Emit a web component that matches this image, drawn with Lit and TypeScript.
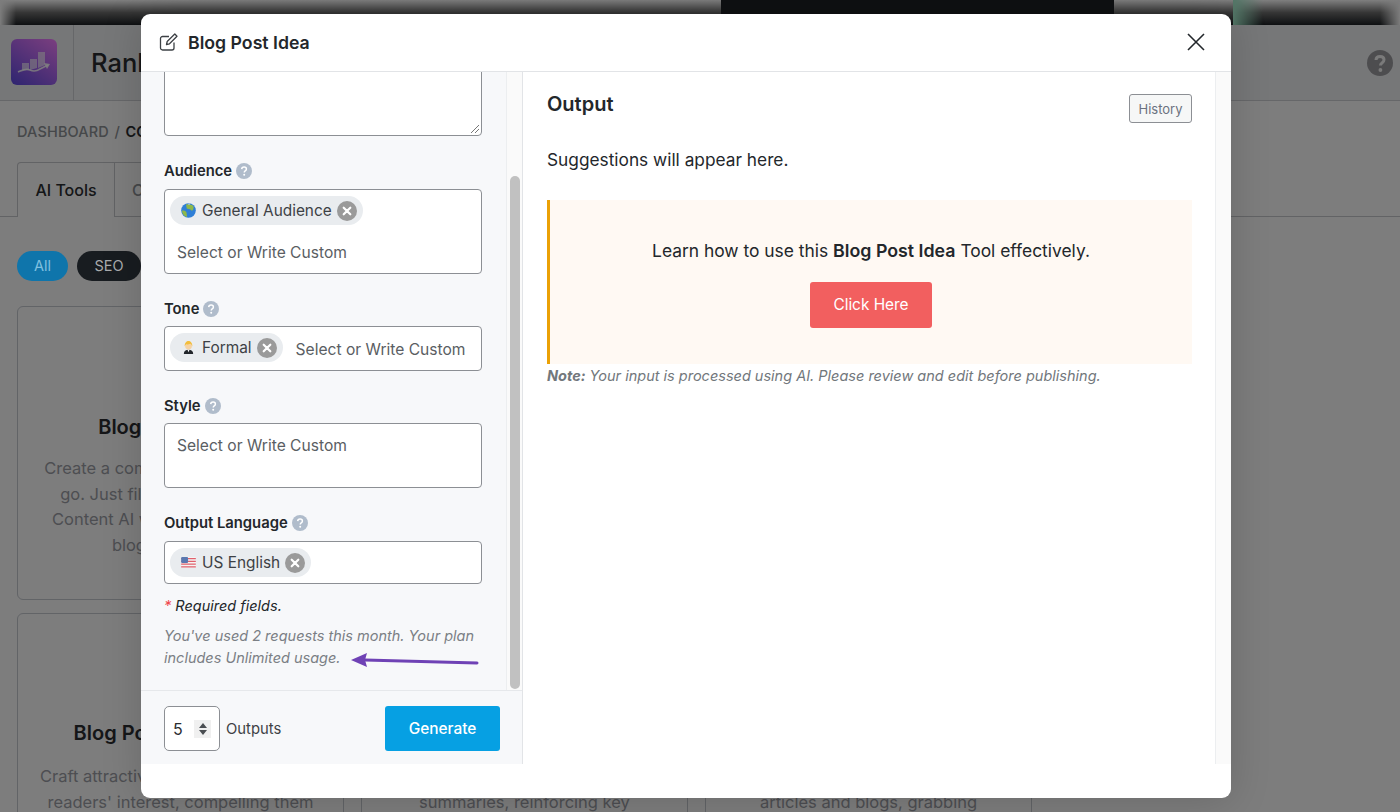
import { LitElement, html, css, svg } from "lit";
import { customElement } from "lit/decorators.js";

const globe = svg`<svg class="emo" viewBox="0 0 16 16" width="15" height="15"><circle cx="8" cy="8" r="7.800" fill="#2f7fd6"/><path d="M6 1c2 1 5 0 7 2 1 2 0 3 0 4-1 2-2 1-3 0-2-1-4 0-4-2 0-1-1-2 0-4zM3 8c1 0 3 1 3 3s1 3 0 4C3 14 1 11 1 8z" fill="#8fb84a"/><path d="M8 .6a7.4 7.4 0 0 1 2 .4L8 2z" fill="#fff" opacity=".8"/></svg>`;
const person = svg`<svg class="emo" viewBox="0 0 16 16" width="15" height="15"><path d="M3 15c0-3 2-4.500 5-4.500s5 1.500 5 4.500z" fill="#22262b"/><path d="M7 10.500h2l-1 2.500z" fill="#fff"/><circle cx="8" cy="6.500" r="3.600" fill="#f6d2a2"/><path d="M4 7c-.5-4 2-6 4-6s4.500 2 4 6c-.5-1.500-1-2.500-2-3-1.500.8-3.500.8-4.500.6C4.800 5 4.300 6 4 7z" fill="#f2bd3c"/></svg>`;
const flag = svg`<svg class="emo" viewBox="0 0 16 12" width="15" height="11"><rect width="16" height="12" rx="1.500" fill="#f4f4f4"/><path d="M0 1h16v1.500H0zM0 4h16v1.500H0zM0 7h16v1.500H0zM0 10h16v1.500H0z" fill="#e0606c"/><rect width="7.500" height="6.500" rx="1" fill="#5a78b0"/></svg>`;

const helpIcon = html`<svg class="help" viewBox="0 0 16 16" width="16" height="16"><circle cx="8" cy="8" r="8" fill="#b0bccb"/><path d="M5.700 6.100C5.800 4.800 6.800 4 8.100 4c1.400 0 2.300.8 2.300 2 0 1-.6 1.500-1.200 1.900-.6.400-.9.700-.9 1.400v.2" fill="none" stroke="#fff" stroke-width="1.500"/><circle cx="8.200" cy="11.800" r="1" fill="#fff"/></svg>`;

const chip = (icon: unknown, label: string) => html`<span class="chip">${icon}<span>${label}</span
  ><svg class="chipx" viewBox="0 0 20 20" width="20" height="20"><circle cx="10" cy="10" r="10" fill="#9a9a9a"/><path d="M6.700 6.700l6.600 6.600M13.300 6.700l-6.600 6.600" stroke="#fff" stroke-width="2.200" stroke-linecap="round"/></svg></span>`;

@customElement("app-root")
export class AppRoot extends LitElement {
  static styles = css`
    :host { display: block; width: 1400px; height: 812px; overflow: hidden; position: relative; font-family: Inter, "Liberation Sans", sans-serif; color: #1f2328; }
    * { box-sizing: border-box; }
    .page { width: 1400px; height: 812px; background: #fafafa; overflow: hidden; }
    .strip { height: 25px; position: relative; background:
      linear-gradient(90deg, #fafafa 0, transparent 16px, transparent 1380px, #fafafa 1400px),
      linear-gradient(180deg, #fff 0, #6c6c6c 50%, #1c2024 100%); }
    .strip .black { position: absolute; left: 721px; width: 393px; top: 0; bottom: 0; background: #1c2024; }
    .strip .glow { position: absolute; left: 1233px; width: 30px; top: 0; bottom: 0; background: linear-gradient(90deg, #a8f0d0, transparent); }
    .top { height: 76px; display: flex; align-items: stretch; background: #edeef0; border-bottom: 1px solid #ccced2; }
    .logoCell { width: 74px; border-right: 1px solid #ccced2; padding-left: 11px; display: flex; align-items: center; padding-bottom: 1px; }
    .logo { width: 46px; height: 46px; border-radius: 6px; background: linear-gradient(35deg, #5c4ae0 0%, #f67eff 100%); display: flex; align-items: center; justify-content: center; }
    .brand { font-size: 25.500px; font-weight: 500; color: #2a2d30; padding-left: 17px; line-height: 76px; flex: 1; }
    .qmark { margin: 25px 7px 0 0; }
    .crumbs { padding: 22px 17px 0; font-size: 14.500px; font-weight: 500; line-height: 18px; color: #8c9094; height: 61px; letter-spacing: .15px; word-spacing: 1.500px; }
    .crumbs b { color: #2a2d30; font-weight: 600; }
    .tabs { display: flex; padding-left: 17px; height: 55px; border-bottom: 1px solid #c4c6ca; }
    .tab { padding: 0 17px; border: 1px solid #c4c6ca; border-bottom: none; font-size: 16px; font-weight: 500; line-height: 54px; color: #2a2d30; }
    .tab.on { background: #fafafa; width: 98px; border-radius: 4px 0 0 0; height: 55px; text-align: center; padding: 0; }
    .tab.off { color: #8c9094; border-left: none; padding: 0 17px; }
    .pills { display: flex; gap: 9px; padding: 34px 17px 0; height: 89px; }
    .pill { position: relative; z-index: 1; height: 30px; border-radius: 15px; font-size: 14.500px; line-height: 30px; text-align: center; }
    .pill.a { width: 51px; background: #0f75ab; color: #7fc0e0; }
    .pill.b { width: 64px; background: #181c20; color: #a9abad; }
    .grid { display: grid; grid-template-columns: repeat(3, 327px); gap: 13px 17px; padding-left: 17px; }
    .card { height: 294px; border: 1px solid #c4c8cf; border-radius: 6px; padding: 106px 10px 0; text-align: center; }
    .card h3 { margin: 0; min-height: 28px; font-size: 20px; font-weight: 600; line-height: 28px; color: #2a2d30; }
    .card p { margin: 15px 0 0; min-height: 51px; font-size: 16.500px; line-height: 25.500px; color: #9a9da4; white-space: nowrap; }
    .card.second h3 { margin-top: -1px; }
    .card.second p { margin-top: 17px; }

    .dim { position: absolute; inset: 0; background: rgba(0, 0, 0, .5); }
    .modal { position: absolute; z-index: 2; left: 141px; top: 14px; width: 1090px; height: 784px; background: #fff; border-radius: 9px; display: flex; flex-direction: column; padding-bottom: 34px; box-shadow: 0 2px 40px rgba(0, 0, 0, .16); overflow: hidden; }
    .head { height: 58px; flex: none; display: flex; align-items: center; padding: 0 26px 1px 18px; border-bottom: 1px solid #e2e4e7; }
    .head h2 { margin: 0 0 0 9px; flex: 1; font-size: 17.700px; font-weight: 600; color: #23272b; }
    .body { flex: 1; display: flex; min-height: 0; }
    .left { width: 382px; flex: none; display: flex; flex-direction: column; background: #f7f8fa; border-right: 1px solid #e2e4e7; }
    .scroll { flex: 1; min-height: 0; display: flex; border-bottom: 1px solid #e6e8eb; }
    .fields { flex: 1; min-width: 0; padding: 0 24px 0 23px; overflow: hidden; position: relative; }
    .track { width: 16px; flex: none; background: #fafafa; border-left: 1px solid #eceef0; padding: 104px 2px 1px 3px; display: flex; }
    .thumb { flex: 1; background: #c1c1c1; border-radius: 5px; }
    .box { background: #fff; border: 1px solid #8c8f94; border-radius: 4px; display: flex; flex-wrap: wrap; align-content: flex-start; padding: 6px 5px; position: relative; }
    .ta { height: 85px; margin-top: -21px; }
    .grip { position: absolute; right: 1px; bottom: 1px; }
    .label { display: flex; align-items: center; gap: 4px; height: 20px; padding-top: 2px; margin-top: 24px; margin-bottom: 8px; font-size: 14.800px; font-weight: 600; color: #23272b; }
    .label.first { margin-bottom: 9px; }
    .help { flex: none; margin-top: -1px; }
    .chip { display: inline-flex; align-items: center; height: 29px; padding: 0 6px 0 11px; border-radius: 15px; background: #e9ecef; font-size: 15.400px; color: #3d4145; }
    .emo { margin-right: 6px; flex: none; }
    .chipx { margin-left: 5px; flex: none; }
    .ph { font-size: 15.600px; color: #5a5e63; line-height: 30px; padding-left: 7px; }
    .aud { height: 85px; }
    .aud .ph { width: 100%; margin-top: 13px; }
    .tone { height: 45px; }
    .tone .ph { padding-left: 13px; margin-top: 2px; }
    .sty { height: 65px; }
    .sty .ph { margin-top: 1px; }
    .lang { height: 43px; }
    .label.gap9 { margin-bottom: 9px; }
    .req { margin: 11px 0 0; font-size: 14.500px; line-height: 22px; font-style: italic; color: #23272b; }
    .req span { color: #f0484f; }
    .usage { margin: 8px 0 0; font-size: 14.500px; line-height: 22px; font-style: italic; color: #7b7f85; }
    .arrow { position: absolute; left: 209px; top: 578px; }
    .foot { height: 73px; flex: none; display: flex; align-items: center; padding: 2px 22px 0 23px; }
    .num { width: 56px; height: 45px; background: #fff; border: 1px solid #8c8f94; border-radius: 5px; display: flex; align-items: center; justify-content: space-between; padding: 0 8px; font-size: 16px; color: #2a2d30; }
    .spin { width: 17px; height: 18px; background: #f0f0f0; display: flex; align-items: center; justify-content: center; }
    .outs { margin-left: 6px; flex: 1; font-size: 14.800px; color: #3d4145; }
    .gen { width: 115px; height: 45px; border-radius: 3px; background: #06a0e3; color: #fff; font-size: 15.400px; font-weight: 500; display: flex; align-items: center; justify-content: center; }
    .right { flex: 1; min-width: 0; padding: 0 23px 0 24px; }
    .rtop { display: flex; justify-content: space-between; align-items: flex-start; padding-top: 18px; }
    .rtop h3 { margin: 0; font-size: 20px; line-height: 28px; font-weight: 600; color: #23272b; }
    .hist { margin-top: 4px; width: 63px; height: 29px; border: 1px solid #8c8f94; border-radius: 3px; background: #f6f7f7; color: #6b7280; font-size: 13px; display: flex; align-items: center; justify-content: center; }
    .sugg { margin: 24px 0 0; font-size: 17.300px; line-height: 26px; color: #23272b; }
    .notice { margin-top: 27px; height: 164px; background: #fff9f3; border-left: 3px solid #eba106; display: flex; flex-direction: column; align-items: center; padding-top: 38px; font-size: 17.400px; line-height: 26px; color: #23272b; }
    .notice b { font-weight: 600; font-size: 17.800px; }
    .cta { margin-top: 18px; width: 122px; height: 46px; border-radius: 3px; background: #f25f5f; color: #fff; font-size: 15.400px; display: flex; align-items: center; justify-content: center; }
    .note { margin: 1px 0 0; font-size: 14.500px; line-height: 22px; font-style: italic; color: #72777c; }
    .rtrack { width: 16px; flex: none; background: #fafafa; border-left: 1px solid #eceef0; }
  `;

  render() {
    return html`
      <div class="page">
        <div class="strip"><div class="black"></div><div class="glow"></div></div>
        <div class="top">
          <div class="logoCell"><div class="logo">
            <svg viewBox="0 0 46 46" width="46" height="46"><path d="M11 24h7v7h-7zM19 20h7v9l-7 2zM27 13h7v13l-7 3z" fill="#fff" opacity=".62"/><path d="M7 33c5-2 8-4 12-2s7 1 10-1l8-4" fill="none" stroke="#fff" stroke-width="1.600" opacity=".85"/><path d="M33 24l6 1-3 5z" fill="#fff" opacity=".85"/></svg>
          </div></div>
          <div class="brand">Rank Math</div>
          <svg class="qmark" viewBox="0 0 26 26" width="26" height="26"><circle cx="13" cy="13" r="13" fill="#9a9b9f"/><path d="M9 10c.1-2.300 1.800-3.500 4-3.500 2.400 0 4 1.400 4 3.300 0 1.700-1 2.500-2 3.200-1 .7-1.500 1.200-1.500 2.400" fill="none" stroke="#f4f4f5" stroke-width="3"/><circle cx="13.400" cy="20" r="1.900" fill="#f4f4f5"/></svg>
        </div>
        <div class="crumbs">DASHBOARD / <b>CONTENT AI</b></div>
        <div class="tabs"><div class="tab on">AI Tools</div><div class="tab off">Content Editor</div></div>
        <div class="pills"><div class="pill a">All</div><div class="pill b">SEO</div></div>
        <div class="grid">
          <div class="card"><h3>Blog Post Wizard</h3><p>Create a complete blog post in one<br />go. Just fill in some details and<br />Content AI will create a complete<br />blog post for you.</p></div>
          <div class="card"></div>
          <div class="card"></div>
          <div class="card second"><h3>Blog Post Introduction</h3><p>Craft attractive intros that hook your<br />readers' interest, compelling them</p></div>
          <div class="card second"><h3></h3><p>&nbsp;<br />summaries, reinforcing key</p></div>
          <div class="card second"><h3></h3><p>&nbsp;<br />articles and blogs, grabbing</p></div>
        </div>
      </div>
      <div class="dim"></div>
      <div class="modal">
        <div class="head">
          <svg viewBox="0 0 20 20" width="20" height="20"><path d="M15 10.500V16a2 2 0 0 1-2 2H3.500a2 2 0 0 1-2-2V6.500a2 2 0 0 1 2-2H10" fill="none" stroke="#3d4145" stroke-width="1.300"/><path d="M7.500 12.500l.7-3L15.800 2l2.200 2.200-7.500 7.600z" fill="none" stroke="#3d4145" stroke-width="1.300" stroke-linejoin="round"/></svg>
          <h2>Blog Post Idea</h2>
          <svg viewBox="0 0 18 18" width="18" height="18"><path d="M1 1l16 16M17 1L1 17" stroke="#23272b" stroke-width="1.600"/></svg>
        </div>
        <div class="body">
          <div class="left">
            <div class="scroll">
              <div class="fields">
                <div class="box ta"><svg class="grip" viewBox="0 0 10 10" width="10" height="10"><path d="M1 9l8-8M5 9l4-4" stroke="#777" stroke-width="1"/></svg></div>
                <div class="label first">Audience ${helpIcon}</div>
                <div class="box aud">${chip(globe, "General Audience")}<span class="ph">Select or Write Custom</span></div>
                <div class="label">Tone ${helpIcon}</div>
                <div class="box tone">${chip(person, "Formal")}<span class="ph">Select or Write Custom</span></div>
                <div class="label">Style ${helpIcon}</div>
                <div class="box sty"><span class="ph">Select or Write Custom</span></div>
                <div class="label gap9">Output Language ${helpIcon}</div>
                <div class="box lang">${chip(flag, "US English")}</div>
                <p class="req"><span>*</span> Required fields.</p>
                <p class="usage">You've used 2 requests this month. Your plan includes Unlimited usage.</p>
                <svg class="arrow" viewBox="0 0 130 20" width="130" height="20"><path d="M15 10l112 3" stroke="#6f42b5" stroke-width="3" stroke-linecap="round"/><path d="M1 10l16-7-2 7 2 7z" fill="#6f42b5"/></svg>
              </div>
              <div class="track"><div class="thumb"></div></div>
            </div>
            <div class="foot">
              <div class="num"><span>5</span><span class="spin"><svg viewBox="0 0 10 14" width="10" height="14"><path d="M5 1l4 5H1zM5 13L1 8h8z" fill="#4a4e52"/></svg></span></div>
              <div class="outs">Outputs</div>
              <div class="gen">Generate</div>
            </div>
          </div>
          <div class="right">
            <div class="rtop"><h3>Output</h3><div class="hist">History</div></div>
            <p class="sugg">Suggestions will appear here.</p>
            <div class="notice">
              <div>Learn how to use this <b>Blog Post Idea</b> Tool effectively.</div>
              <div class="cta">Click Here</div>
            </div>
            <p class="note"><b>Note:</b> Your input is processed using AI. Please review and edit before publishing.</p>
          </div>
          <div class="rtrack"></div>
        </div>
      </div>
    `;
  }
}
